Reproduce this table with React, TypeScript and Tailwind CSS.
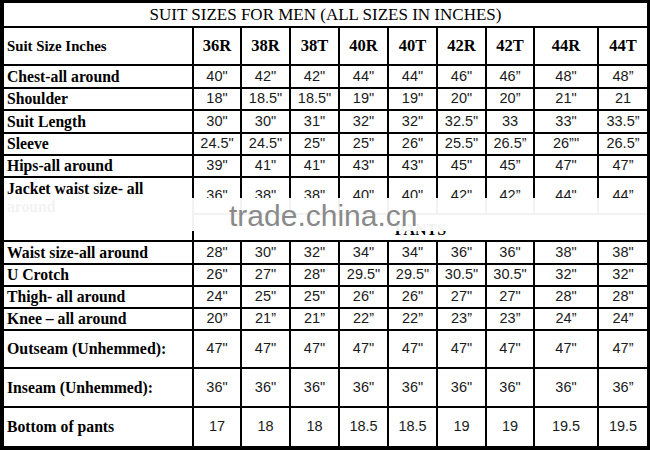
const sizes = ['36R', '38R', '38T', '40R', '40T', '42R', '42T', '44R', '44T']

type Row = { label: string; values: string[]; h: string; labelSize?: string }

const suitRows: Row[] = [
  { label: 'Chest-all around', values: ['40"', '42"', '42"', '44"', '44"', '46"', '46”', '48"', '48”'], h: 'h-[23px]' },
  { label: 'Shoulder', values: ['18"', '18.5"', '18.5"', '19"', '19"', '20"', '20”', '21"', '21'], h: 'h-[22px]' },
  { label: 'Suit Length', values: ['30"', '30"', '31"', '32"', '32"', '32.5"', '33', '33"', '33.5”'], h: 'h-[23px]' },
  { label: 'Sleeve', values: ['24.5"', '24.5"', '25"', '25"', '26"', '25.5"', '26.5”', '26”"', '26.5”'], h: 'h-[22px]' },
  { label: 'Hips-all around', values: ['39"', '41"', '41"', '43"', '43"', '45"', '45”', '47"', '47”'], h: 'h-[22px]' },
]

const jacket = ['36"', '38"', '38"', '40"', '40"', '42"', '42”', '44"', '44”']

const pantRows: Row[] = [
  { label: 'Waist size-all around', values: ['28"', '30"', '32"', '34"', '34"', '36"', '36"', '38"', '38"'], h: 'h-[23px]' },
  { label: 'U Crotch', values: ['26"', '27"', '28"', '29.5"', '29.5"', '30.5"', '30.5"', '32"', '32"'], h: 'h-[22px]' },
  { label: 'Thigh- all around', values: ['24"', '25"', '25"', '26"', '26"', '27"', '27"', '28"', '28"'], h: 'h-[22px]' },
  { label: 'Knee – all around', values: ['20”', '21”', '21”', '22”', '22”', '23”', '23”', '24”', '24”'], h: 'h-[22px]' },
  { label: 'Outseam (Unhemmed):', values: ['47"', '47"', '47"', '47"', '47"', '47"', '47"', '47"', '47”'], h: 'h-[38px]', labelSize: 'text-[15.9px]' },
  { label: 'Inseam (Unhemmed):', values: ['36"', '36"', '36"', '36"', '36"', '36"', '36"', '36"', '36”'], h: 'h-[39px]' },
  { label: 'Bottom of pants', values: ['17', '18', '18', '18.5', '18.5', '19', '19', '19.5', '19.5'], h: 'h-[38px]' },
]

const serif = "font-['Liberation_Serif','Times_New_Roman',serif]"
const sans = "font-['Liberation_Sans',Arial,sans-serif]"

function Label({ row, last }: { row: Row; last?: boolean }) {
  return (
    <div
      className={`${row.h} flex items-center pl-[3px] border-r-2 border-black ${last ? '' : 'border-b-2'} ${serif} font-bold ${row.labelSize ?? 'text-[15.7px]'} text-black whitespace-nowrap`}
    >
      {row.label}
    </div>
  )
}

function Value({ v, h, lastCol, lastRow }: { v: string; h: string; lastCol: boolean; lastRow?: boolean }) {
  return (
    <div
      className={`${h} flex items-center justify-center border-black ${lastCol ? '' : 'border-r-2'} ${lastRow ? '' : 'border-b-2'} ${sans} text-[14.5px] text-[#1a1a1a]`}
    >
      {v}
    </div>
  )
}

function DataRows({ rows, lastIsEnd }: { rows: Row[]; lastIsEnd?: boolean }) {
  return (
    <>
      {rows.map((r, i) => {
        const end = lastIsEnd && i === rows.length - 1
        return (
          <div key={r.label} className="contents">
            <Label row={r} last={end} />
            {r.values.map((v, j) => (
              <Value key={j} v={v} h={r.h} lastCol={j === 8} lastRow={end} />
            ))}
          </div>
        )
      })}
    </>
  )
}

export default function App() {
  return (
    <div className="w-[650px] h-[450px] bg-white">
      <div className="relative w-[650px] h-[450px] border-l-4 border-t-[3px] border-r-[3px] border-b-4 border-black overflow-hidden">
        <div className="grid grid-cols-[190px_48px_49px_49px_49px_49px_49px_48px_64px_48px]">
          {/* title */}
          <div className={`col-span-10 h-[25px] flex items-center justify-center border-b-2 border-black ${serif} text-[17px] text-black`}>
            SUIT SIZES FOR MEN (ALL SIZES IN INCHES)
          </div>

          {/* header */}
          <div className={`h-[38px] flex items-center pl-[3px] border-r-2 border-b-2 border-black ${serif} font-bold text-[14.8px]`}>
            Suit Size Inches
          </div>
          {sizes.map((s, j) => (
            <div
              key={s}
              className={`h-[38px] flex items-center justify-center border-b-2 border-black ${j === 8 ? '' : 'border-r-2'} ${serif} font-bold text-[16.5px]`}
            >
              {s}
            </div>
          ))}

          <DataRows rows={suitRows} />

          {/* jacket waist + pants heading */}
          <div className={`row-span-2 pl-[3px] pt-[2px] leading-[18px] border-r-2 border-b-2 border-black ${serif} font-bold text-[15.7px]`}>
            Jacket waist size- all
            <br />
            around
          </div>
          {jacket.map((v, j) => (
            <Value key={j} v={v} h="h-[37px]" lastCol={j === 8} />
          ))}
          <div className={`col-span-9 h-[27px] flex items-center justify-center pt-[4px] border-b-2 border-black ${serif} font-bold text-[16px]`}>
            PANTS
          </div>

          <DataRows rows={pantRows} lastIsEnd />
        </div>

        {/* watermark band */}
        <div className="absolute left-[-4px] right-[-3px] top-[195px] h-[33px] bg-white/95" />
        <div className={`absolute left-[225px] top-[198px] leading-[30px] text-[30px] text-[#8a8a8a] ${sans}`}>
          trade.china.cn
        </div>
      </div>
    </div>
  )
}
